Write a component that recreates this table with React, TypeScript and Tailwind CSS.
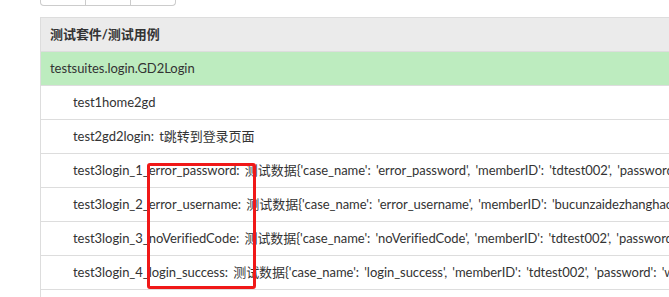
import React from "react"

const font = { fontFamily: 'Lato, "Noto Sans CJK SC", sans-serif' }

const cases = [
  "test1home2gd",
  "test2gd2login: t跳转到登录页面",
  "test3login_1_error_password: 测试数据{'case_name': 'error_password', 'memberID': 'tdtest002', 'password': 'wrong'}",
  "test3login_2_error_username: 测试数据{'case_name': 'error_username', 'memberID': 'bucunzaidezhanghao', 'password': 'wrong'}",
  "test3login_3_noVerifiedCode: 测试数据{'case_name': 'noVerifiedCode', 'memberID': 'tdtest002', 'password': 'wrong'}",
  "test3login_4_login_success: 测试数据{'case_name': 'login_success', 'memberID': 'tdtest002', 'password': 'wrong'}",
  "",
]

export default function App() {
  return (
    <div className="relative w-[669px] h-[297px] overflow-hidden bg-white text-[13px] tracking-[-0.05px] [word-spacing:2px] text-[#333]" style={font}>
      <div className="ml-[40px] flex h-[6px] w-[136px] rounded-b-[4px] border border-t-0 border-[#ccc]">
        <div className="w-[45px] border-r border-[#ccc]" />
        <div className="w-[45px] border-r border-[#ccc]" />
        <div className="flex-1" />
      </div>
      <div className="ml-[40px] mt-[11px] w-[700px] border-l border-t border-[#ddd]">
        <div className="flex h-[34px] items-center border-b border-[#ddd] bg-[#ebebeb] pl-[9px] font-bold">
          测试套件/测试用例
        </div>
        <div className="flex h-[34px] items-center border-b border-[#ddd] bg-[#bdecbf] pl-[9px]">
          testsuites.login.GD2Login
        </div>
        {cases.map((c, i) => (
          <div key={i} className="flex h-[34px] items-center whitespace-nowrap border-b border-[#ddd] pl-[32px]">
            {c}
          </div>
        ))}
      </div>
      <div className="absolute left-[147px] top-[163px] h-[126px] w-[109px] rounded-[3px] border-[3px] border-[#f01818]" />
    </div>
  )
}
